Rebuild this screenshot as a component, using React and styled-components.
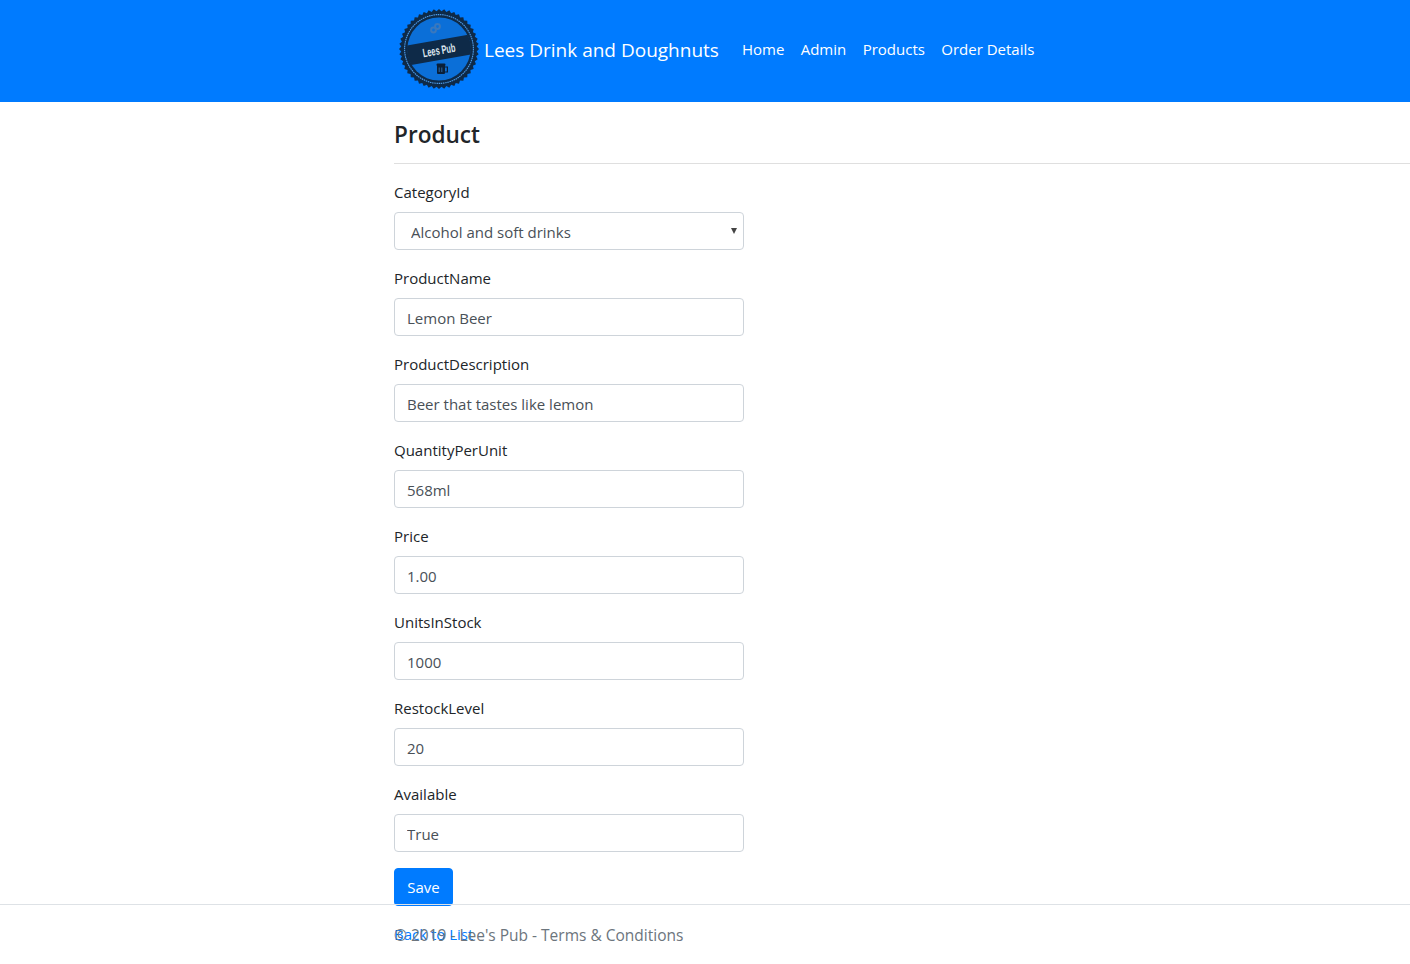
import React from 'react';
import styled, { createGlobalStyle } from 'styled-components';

const fields = [
  { label: 'ProductName', value: 'Lemon Beer' },
  { label: 'ProductDescription', value: 'Beer that tastes like lemon' },
  { label: 'QuantityPerUnit', value: '568ml' },
  { label: 'Price', value: '1.00' },
  { label: 'UnitsInStock', value: '1000' },
  { label: 'RestockLevel', value: '20' },
  { label: 'Available', value: 'True' },
];

const navLinks = ['Home', 'Admin', 'Products', 'Order Details'];

// saw-tooth edge of the badge
const teeth = () => {
  const pts = [];
  for (let i = 0; i < 96; i++) {
    const r = i % 2 ? 37.8 : 40;
    const a = (i / 96) * Math.PI * 2;
    pts.push(`${(40 + r * Math.cos(a)).toFixed(2)},${(40 + r * Math.sin(a)).toFixed(2)}`);
  }
  return pts.join(' ');
};

const Logo = () => (
  <LogoSvg viewBox="0 0 80 80" width="80" height="80">
    <defs>
      <clipPath id="badge-disc">
        <circle cx="40" cy="40" r="32" />
      </clipPath>
    </defs>
    <polygon points={teeth()} fill="#0e2a48" />
    <circle cx="40" cy="40" r="34.4" fill="none" stroke="#4f9fee" strokeWidth="1.1" strokeDasharray="1.5 0.7" />
    <circle cx="40" cy="40" r="31.6" fill="#0b6fd8" />
    <g clipPath="url(#badge-disc)">
      <g transform="rotate(-10 40 41)">
        <rect x="4" y="31" width="72" height="20" fill="#0e2a48" />
        <text x="40" y="45.5" textAnchor="middle" fontFamily="'Liberation Sans', sans-serif" fontSize="12" fontWeight="700" fill="#dfe8f0" textLength="33" lengthAdjust="spacingAndGlyphs">Lees Pub</text>
      </g>
    </g>
    <g fill="none" stroke="#3a78bd" strokeWidth="2">
      <circle cx="34.5" cy="21" r="2.4" />
      <circle cx="38.5" cy="17.5" r="2.4" />
    </g>
    <g>
      <rect x="38" y="56" width="8" height="9" rx="1" fill="#0a1f38" />
      <path d="M46 58h2.4v5H46" fill="none" stroke="#0a1f38" strokeWidth="1.2" />
      <path d="M40.2 58.5v4.5M42.8 58.5v4.5" stroke="#3f86cf" strokeWidth="0.7" />
      <rect x="37.5" y="54.5" width="9" height="2.4" rx="1.2" fill="#0a1f38" />
    </g>
  </LogoSvg>
);

const App = () => (
  <>
    <GlobalStyle />
    <Header>
      <Logo />
      <Brand>Lees Drink and Doughnuts</Brand>
      <Nav>
        {navLinks.map((link) => (
          <NavLink key={link} href="#">{link}</NavLink>
        ))}
      </Nav>
    </Header>
    <Main>
      <Title>Product</Title>
      <Rule />
      <Group>
        <Label>CategoryId</Label>
        <SelectWrap>
          <Select defaultValue="1">
            <option value="1">Alcohol and soft drinks</option>
          </Select>
        </SelectWrap>
      </Group>
      {fields.map((f) => (
        <Group key={f.label}>
          <Label>{f.label}</Label>
          <Input defaultValue={f.value} />
        </Group>
      ))}
      <SaveButton>Save</SaveButton>
      <BackLink href="#">Back to List</BackLink>
    </Main>
    <Footer>© 2019 - Lee's Pub - Terms &amp; Conditions</Footer>
  </>
);

const GlobalStyle = createGlobalStyle`
  html, body {
    margin: 0;
    height: 964px;
    overflow: hidden;
    background: #fff;
  }
  body {
    font-family: 'Open Sans', 'Noto Sans', sans-serif;
    font-size: 15px;
    color: #212529;
  }
  * { box-sizing: border-box; }
`;

const Header = styled.header`
  height: 102px;
  background: #007bff;
  padding: 9px 0 0 399px;
  display: flex;
  align-items: flex-start;
`;

const LogoSvg = styled.svg`
  display: block;
  flex: none;
`;

const Brand = styled.span`
  margin: 28px 0 0 5px;
  font-size: 19px;
  line-height: 26px;
  color: #fff;
  white-space: nowrap;
`;

const Nav = styled.nav`
  display: flex;
  gap: 16.4px;
  margin: 30px 0 0 23px;
`;

const NavLink = styled.a`
  font-size: 15px;
  line-height: 20px;
  color: #fff;
  text-decoration: none;
  white-space: nowrap;
`;

const Main = styled.main`
  padding-left: 394px;
`;

const Title = styled.h4`
  margin: 0;
  padding-top: 17px;
  font-size: 22.6px;
  line-height: 32px;
  font-weight: 600;
  color: #212529;
`;

const Rule = styled.hr`
  margin: 12px 0 0;
  border: 0;
  border-top: 1px solid #dfdfdf;
`;

const Group = styled.div`
  width: 350px;
  height: 86px;
  padding-top: 17px;
`;

const Label = styled.label`
  display: block;
  height: 31px;
  font-size: 15px;
  line-height: 22px;
  color: #212529;
`;

const controlStyle = `
  display: block;
  width: 350px;
  height: 38px;
  border: 1px solid #ced4da;
  border-radius: 4px;
  background: #fff;
  font-family: 'Open Sans', 'Noto Sans', sans-serif;
  font-size: 15px;
  color: #495057;
  outline: none;
`;

const Input = styled.input`
  ${controlStyle}
  padding: 2px 12px 0;
`;

const SelectWrap = styled.div`
  position: relative;
  width: 350px;

  &::after {
    content: '';
    position: absolute;
    top: 16px;
    right: 7px;
    border-left: 3px solid transparent;
    border-right: 3px solid transparent;
    border-top: 6px solid #444;
    pointer-events: none;
  }
`;

const Select = styled.select`
  ${controlStyle}
  appearance: none;
  padding: 2px 12px 0 16px;
`;

const SaveButton = styled.button`
  display: block;
  width: 59px;
  height: 38px;
  margin-top: 16px;
  border: 1px solid #007bff;
  border-radius: 4px;
  background: #007bff;
  color: #fff;
  font-family: 'Open Sans', 'Noto Sans', sans-serif;
  font-size: 15px;
  padding: 0;
`;

const BackLink = styled.a`
  display: inline-block;
  margin-top: 17px;
  font-size: 15px;
  line-height: 22px;
  color: #007bff;
  text-decoration: none;
`;

const Footer = styled.footer`
  position: absolute;
  left: 0;
  right: 0;
  top: 904px;
  height: 60px;
  padding-left: 394px;
  border-top: 1px solid #dee2e6;
  line-height: 60px;
  font-size: 15.5px;
  color: #6c757d;
  white-space: nowrap;
`;

export default App;
